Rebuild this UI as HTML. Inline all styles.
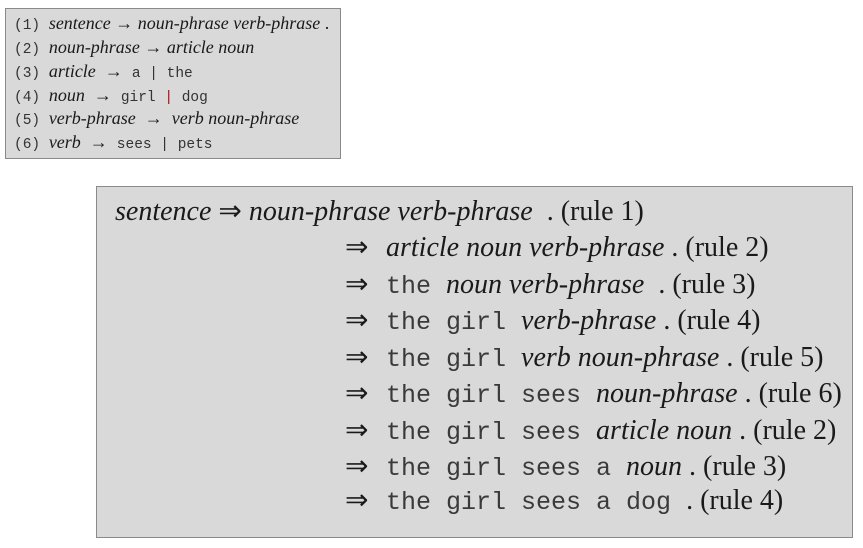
<!DOCTYPE html>
<html><head><meta charset="utf-8"><style>
body{margin:0;width:863px;height:548px;background:#fff;position:relative;overflow:hidden;color:#1a1a1a}
.box{position:absolute;background:#d9d9d9;border:1px solid #8a8a8a;box-sizing:border-box}
.l{position:absolute;white-space:pre;font-family:"Liberation Serif",serif;line-height:1}
i{font-style:italic}
.m{font-family:"Liberation Mono",monospace;color:#333}
.s .l{font-size:18px}
.s .m{font-size:14.5px}
.b .l{font-size:28px}
.b .m{font-size:25px;color:#3a3a3a}
.ar{display:inline-block;width:41px}
</style></head><body>
<div class="box s" style="left:5px;top:8px;width:336px;height:151px">
<div class="l" style="left:8px;top:5px"><span class="m">(1) </span><i>sentence</i> → <i>noun-phrase verb-phrase</i> .</div>
<div class="l" style="left:8px;top:29px"><span class="m">(2) </span><i>noun-phrase</i> → <i>article noun</i></div>
<div class="l" style="left:8px;top:53px"><span class="m">(3) </span><i>article</i>  →  <span class="m">a | the</span></div>
<div class="l" style="left:8px;top:77px"><span class="m">(4) </span><i>noun</i>  →  <span class="m">girl <span style="color:#8b1a1a">|</span> dog</span></div>
<div class="l" style="left:8px;top:100px"><span class="m">(5) </span><i>verb-phrase</i>  →  <i>verb noun-phrase</i></div>
<div class="l" style="left:8px;top:124px"><span class="m">(6) </span><i>verb</i>  →  <span class="m">sees | pets</span></div>
</div>
<div class="box b" style="left:96px;top:186px;width:757px;height:352px">
<div class="l" style="left:18px;top:11px"><i>sentence</i> ⇒ <i>noun-phrase verb-phrase</i>  . (rule 1)</div>
<div class="l" style="left:248px;top:47px"><span class="ar">⇒</span><i>article noun verb-phrase</i> . (rule 2)</div>
<div class="l" style="left:248px;top:84px"><span class="ar">⇒</span><span class="m">the </span><i>noun verb-phrase</i>  . (rule 3)</div>
<div class="l" style="left:248px;top:120px"><span class="ar">⇒</span><span class="m">the girl </span><i>verb-phrase</i> . (rule 4)</div>
<div class="l" style="left:248px;top:157px"><span class="ar">⇒</span><span class="m">the girl </span><i>verb noun-phrase</i> . (rule 5)</div>
<div class="l" style="left:248px;top:193px"><span class="ar">⇒</span><span class="m">the girl sees </span><i>noun-phrase</i> . (rule 6)</div>
<div class="l" style="left:248px;top:230px"><span class="ar">⇒</span><span class="m">the girl sees </span><i>article noun</i> . (rule 2)</div>
<div class="l" style="left:248px;top:266px"><span class="ar">⇒</span><span class="m">the girl sees a </span><i>noun</i> . (rule 3)</div>
<div class="l" style="left:248px;top:300px"><span class="ar">⇒</span><span class="m">the girl sees a dog </span>. (rule 4)</div>
</div>
</body></html>
